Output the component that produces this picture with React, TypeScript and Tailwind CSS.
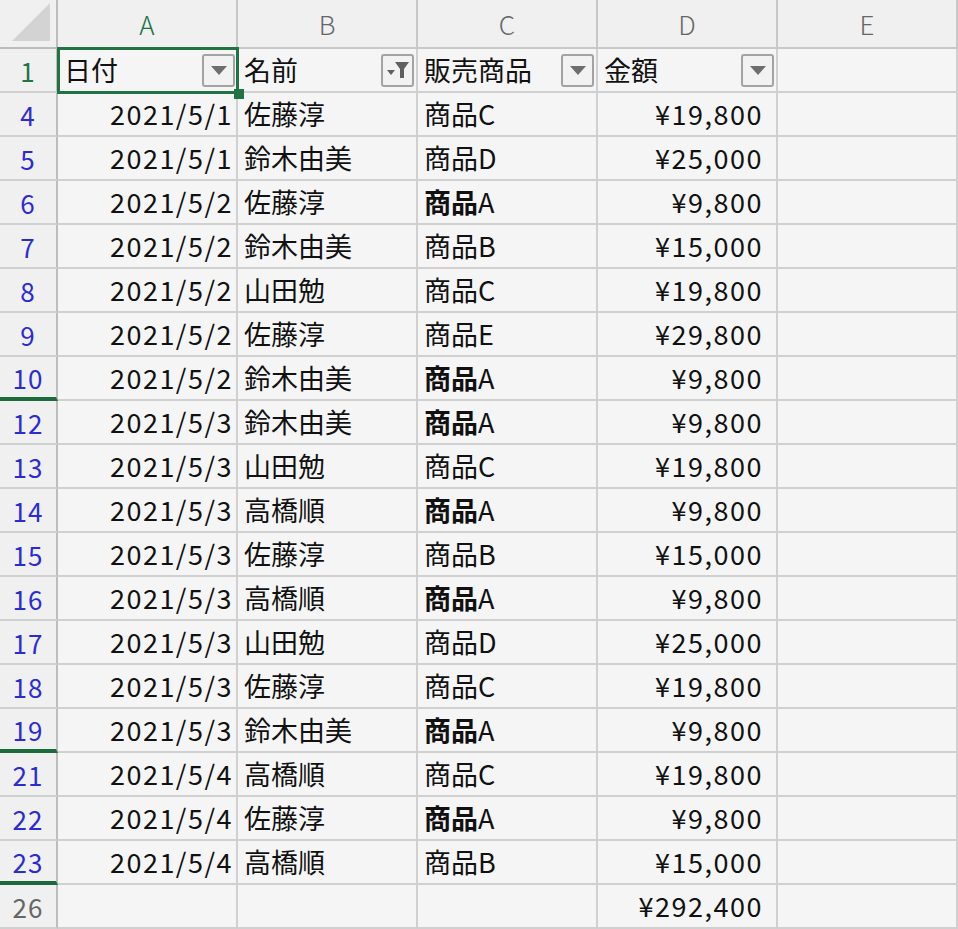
import React from 'react';

type Row = {
  num: string;
  date: string;
  name: string;
  item: string;
  amount: string;
  line?: boolean;
};

const rows: Row[] = [
  { num: '4', date: '2021/5/1', name: '佐藤淳', item: 'C', amount: '¥19,800' },
  { num: '5', date: '2021/5/1', name: '鈴木由美', item: 'D', amount: '¥25,000' },
  { num: '6', date: '2021/5/2', name: '佐藤淳', item: 'A', amount: '¥9,800' },
  { num: '7', date: '2021/5/2', name: '鈴木由美', item: 'B', amount: '¥15,000' },
  { num: '8', date: '2021/5/2', name: '山田勉', item: 'C', amount: '¥19,800' },
  { num: '9', date: '2021/5/2', name: '佐藤淳', item: 'E', amount: '¥29,800' },
  { num: '10', date: '2021/5/2', name: '鈴木由美', item: 'A', amount: '¥9,800', line: true },
  { num: '12', date: '2021/5/3', name: '鈴木由美', item: 'A', amount: '¥9,800' },
  { num: '13', date: '2021/5/3', name: '山田勉', item: 'C', amount: '¥19,800' },
  { num: '14', date: '2021/5/3', name: '高橋順', item: 'A', amount: '¥9,800' },
  { num: '15', date: '2021/5/3', name: '佐藤淳', item: 'B', amount: '¥15,000' },
  { num: '16', date: '2021/5/3', name: '高橋順', item: 'A', amount: '¥9,800' },
  { num: '17', date: '2021/5/3', name: '山田勉', item: 'D', amount: '¥25,000' },
  { num: '18', date: '2021/5/3', name: '佐藤淳', item: 'C', amount: '¥19,800' },
  { num: '19', date: '2021/5/3', name: '鈴木由美', item: 'A', amount: '¥9,800', line: true },
  { num: '21', date: '2021/5/4', name: '高橋順', item: 'C', amount: '¥19,800' },
  { num: '22', date: '2021/5/4', name: '佐藤淳', item: 'A', amount: '¥9,800' },
  { num: '23', date: '2021/5/4', name: '高橋順', item: 'B', amount: '¥15,000', line: true },
];

const cell =
  'w-[180px] h-full shrink-0 border-r-2 border-b-2 border-[#d0d0d0] flex items-center';

function FilterButton({ active }: { active?: boolean }) {
  return (
    <div className="w-[33px] h-[33px] shrink-0 rounded-[3px] border-2 border-[#a3a3a3] bg-[#f2f2f2] flex items-center justify-center">
      {active ? (
        <svg width="26" height="22" viewBox="0 0 26 22">
          <path d="M2 11 L10 11 L6 16 Z" fill="#5f5f5f" />
          <path d="M10 3 L24 3 L19 10 L19 19 L15 19 L15 10 Z" fill="#5f5f5f" />
        </svg>
      ) : (
        <svg width="18" height="11" viewBox="0 0 18 11">
          <path d="M1 1 L17 1 L9 10 Z" fill="#6e6e6e" />
        </svg>
      )}
    </div>
  );
}

function RowHead({ num, color, line }: { num: string; color: string; line?: boolean }) {
  return (
    <div
      className={`w-[58px] h-full shrink-0 border-r-2 border-[#bdbdbd] bg-[#f0f0f0] flex items-center justify-center text-[26px] tracking-[1px] ${color} ${
        line ? 'border-b-[4px] border-b-[#1d6b3d]' : 'border-b-2 border-b-[#d0d0d0]'
      }`}
    >
      {num}
    </div>
  );
}

export default function App() {
  return (
    <div
      className="w-[958px] h-[929px] overflow-hidden bg-[#f5f5f5] text-[#111]"
      style={{ fontFamily: '"Noto Sans CJK JP", "Noto Sans", sans-serif' }}
    >
      {/* column headers */}
      <div className="flex h-[49px] bg-[#f0f0f0]">
        <div className="w-[58px] h-full shrink-0 border-r-2 border-b-2 border-[#bdbdbd] flex items-end justify-end p-[6px]">
          <svg width="38" height="38" viewBox="0 0 38 38">
            <path d="M0 38 L38 38 L38 0 Z" fill="#d3d3d3" />
          </svg>
        </div>
        {['A', 'B', 'C', 'D', 'E'].map((c) => (
          <div
            key={c}
            className={`w-[180px] h-full shrink-0 border-r-2 border-b-2 border-[#c8c8c8] flex items-center justify-center text-[26px] font-light ${
              c === 'A' ? 'text-[#217346] border-b-[#217346]' : 'text-[#666]'
            }`}
          >
            {c}
          </div>
        ))}
      </div>

      {/* header row 1 */}
      <div className="flex h-[44px] text-[27px]">
        <RowHead num="1" color="text-[#217346]" />
        <div className="relative w-[180px] h-full shrink-0">
          <div className="absolute -left-[1px] -top-[2px] w-[182px] h-[47px] border-[3px] border-[#217346] flex items-center justify-between pl-[4px] pr-[1px]">
            <span>日付</span>
            <FilterButton />
          </div>
          <div className="absolute -right-[6px] -bottom-[6px] w-[10px] h-[10px] bg-[#217346]" />
        </div>
        <div className={`${cell} justify-between pl-[6px] pr-[2px]`}>
          <span>名前</span>
          <FilterButton active />
        </div>
        <div className={`${cell} justify-between pl-[6px] pr-[2px]`}>
          <span>販売商品</span>
          <FilterButton />
        </div>
        <div className={`${cell} justify-between pl-[6px] pr-[2px]`}>
          <span>金額</span>
          <FilterButton />
        </div>
        <div className={cell} />
      </div>

      {rows.map((r) => (
        <div key={r.num} className="flex h-[44px] text-[27px]">
          <RowHead num={r.num} color="text-[#2b2bd6]" line={r.line} />
          <div className={`${cell} justify-end pr-[3px] tracking-[1.5px]`}>{r.date}</div>
          <div className={`${cell} pl-[6px]`}>{r.name}</div>
          <div className={`${cell} pl-[6px]`}>
            <span className={r.item === 'A' ? 'font-bold' : ''}>商品</span>
            {r.item}
          </div>
          <div className={`${cell} justify-end pr-[13px] tracking-[1.5px]`}>{r.amount}</div>
          <div className={cell} />
        </div>
      ))}

      {/* total row */}
      <div className="flex h-[44px] text-[27px]">
        <RowHead num="26" color="text-[#666]" />
        <div className={cell} />
        <div className={cell} />
        <div className={cell} />
        <div className={`${cell} justify-end pr-[13px] tracking-[1.5px]`}>¥292,400</div>
        <div className={cell} />
      </div>
    </div>
  );
}
